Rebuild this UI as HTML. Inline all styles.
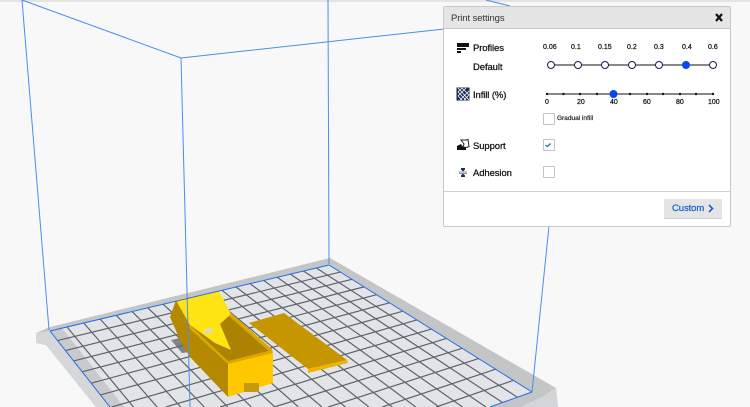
<!DOCTYPE html>
<html><head><meta charset="utf-8"><style>
html,body{margin:0;padding:0;width:750px;height:407px;overflow:hidden}
body{background:#f8f8f8;position:relative;font-family:"Liberation Sans",sans-serif;color:#111}
svg{position:absolute;left:0;top:0;display:block}
#scene{filter:blur(.35px)}
.t{position:absolute;white-space:nowrap;line-height:12px;letter-spacing:-.1px;-webkit-text-stroke:.25px currentColor}
.s{letter-spacing:0}
#panel{position:absolute;left:443px;top:6px;width:286px;height:219px;background:#fff;border:1px solid #c8c8c8;border-radius:2px}
.cb{position:absolute;width:10px;height:10px;background:#fff;border:1px solid #c4c4c4;border-radius:1px}
</style></head><body>
<svg id="scene" width="750" height="407" viewBox="0 0 750 407">
<rect x="0" y="0" width="750" height="2" fill="#e4e4e4"/>
<polygon points="36,333 50,327 330,258 556,388 558,407 96,407 46,345 36,343" fill="#c4c5c7"/>
<polygon points="46,345 36,343 36,333 50,331 112,407 96,407" fill="#d6d7d9"/>
<polygon points="540,398 556,388 558,407 520,407" fill="#d4d5d7"/>
<polygon points="50,331 329,265 532,392 490,407 110,407" fill="#e3e4e7"/>
<polygon points="50,331 62,328 124,407 110,407" fill="#c9cacc"/>
<g id="grid" stroke="#5d6368" stroke-width="1.200" fill="none"></g>
<polygon points="171,340 180,338 190,352 182,353" fill="#5f6368" opacity=".75"/>
<polygon points="249,323 284,313 347,360 308,369" fill="#c69600"/>
<polygon points="308,369 347,360 348,363 308,373" fill="#f0b400"/>
<polygon points="176,300 170,317 180,340 190,357 228,397 228,362 190,325" fill="#b48900"/>
<polygon points="231,314 272,351 228,363 190,326" fill="#ab8300"/>
<polygon points="176,300 219,291 231,314 220,324 231,350 215,343 190,325" fill="#ffe414"/>
<polygon points="228,363 273,353 273,383 228,397" fill="#ffc800"/>
<polygon points="190,325 228,361 272,350 273,353 228,364 189,328" fill="#dca800"/>
<polygon points="231,313 273,350 270,352 229,316" fill="#dca800"/>
<rect x="244" y="383" width="15" height="9" fill="#c49a10"/>
<polygon points="204,330 212,328 213,332 205,334" fill="#d8d8d0"/>
<g stroke="#4a8df0" stroke-width="1" fill="none">
<line x1="49" y1="330" x2="22" y2="0"/>
<line x1="329" y1="264" x2="328" y2="0"/>
<line x1="181" y1="58" x2="190" y2="407"/>
<line x1="181" y1="58" x2="22" y2="0"/>
<line x1="181" y1="58" x2="444" y2="29"/>
<line x1="486" y1="0" x2="510" y2="6"/>
<line x1="532" y1="392" x2="549" y2="226"/>
</g>
<g stroke="#1f6fe8" stroke-width="1" fill="none">
<line x1="50" y1="331" x2="329" y2="265"/>
<line x1="329" y1="265" x2="532" y2="392"/>
<line x1="50" y1="331" x2="110" y2="407"/>
<line x1="532" y1="392" x2="490" y2="407"/>
</g>
</svg>
<div id="panel"></div>
<div style="position:absolute;left:444px;top:7px;width:286px;height:21px;background:#e5e5e6;border-bottom:1px solid #c8c8c8"></div>
<div class="cb" style="left:543px;top:113px"></div>
<div class="cb" style="left:543px;top:139px"></div>
<div class="cb" style="left:543px;top:166px"></div>
<div style="position:absolute;left:444px;top:191px;width:286px;height:1px;background:#d0d0d0"></div>
<div style="position:absolute;left:664px;top:199px;width:58px;height:20px;background:#e5e5e6;border-bottom:1px solid #d0d0d0;box-sizing:border-box"></div>
<svg width="750" height="407" viewBox="0 0 750 407">
<path d="M716 14l6 7M722 14l-6 7" stroke="#111" stroke-width="2.200"/>
<rect x="457" y="43" width="12" height="4" fill="#111"/><rect x="457" y="48" width="9" height="2" fill="#111"/><rect x="457" y="51" width="4" height="2" fill="#111"/>
<rect x="457" y="88" width="12" height="12" fill="#1b2a55" stroke="#1b2a55"/>
<path d="M458 92l4-4M458 96l8-8M460 100l9-9M464 100l5-5M458 92l8 8M458 96l4 4M462 88l7 7M458 88l11 12" stroke="#fff" stroke-width=".8"/>
<path d="M461 140h5l2-.5 1 7-2 1-4-.5 1-3z" fill="#fff" stroke="#222" stroke-width="1"/>
<path d="M457 146l4-2 2 3 3 1v2h-9z" fill="#111"/>
<path d="M461 168h4v1.500l-2 2-2-2zM461 177h4v-1.500l-2-2-2 2z" fill="#1b2a55"/>
<path d="M459 172h8M459 173.500h8" stroke="#6a7488" stroke-width=".7"/>
<line x1="551" y1="65" x2="713" y2="65" stroke="#111" stroke-width="1"/>
<g fill="#fff" stroke="#10204a" stroke-width="1"><circle cx="551" cy="65" r="3.500"/><circle cx="578" cy="65" r="3.500"/><circle cx="605" cy="65" r="3.500"/><circle cx="632" cy="65" r="3.500"/><circle cx="659" cy="65" r="3.500"/><circle cx="713" cy="65" r="3.500"/></g>
<circle cx="686" cy="65" r="4" fill="#0b47f0"/>
<line x1="547" y1="94" x2="713" y2="94" stroke="#111" stroke-width="1"/>
<g fill="#111"><circle cx="547" cy="94" r="1.200"/><circle cx="563.500" cy="94" r="1.200"/><circle cx="580" cy="94" r="1.200"/><circle cx="597" cy="94" r="1.200"/><circle cx="630" cy="94" r="1.200"/><circle cx="647" cy="94" r="1.200"/><circle cx="663" cy="94" r="1.200"/><circle cx="680" cy="94" r="1.200"/><circle cx="696" cy="94" r="1.200"/><circle cx="713" cy="94" r="1.200"/></g>
<circle cx="613.500" cy="94" r="4" fill="#0b47f0"/>
<path d="M545.500 145l2 1.500 3-3" stroke="#1f6fe8" stroke-width="1.300" fill="none"/>
<path d="M709 205l3.500 3.500-3.500 3.500" stroke="#1c5fd0" stroke-width="1.600" fill="none"/>
</svg>
<div class="t" style="left:451px;top:13px;font-size:9.500px;color:#333;-webkit-text-stroke:0">Print settings</div>
<div class="t" style="left:473px;top:43px;font-size:9.500px">Profiles</div>
<div class="t" style="left:473px;top:62px;font-size:9.500px">Default</div>
<div class="t" style="left:473px;top:90px;font-size:9.500px">Infill (%)</div>
<div class="t" style="left:473px;top:141px;font-size:9.500px">Support</div>
<div class="t" style="left:473px;top:168px;font-size:9.500px">Adhesion</div>
<div class="t s" style="left:543px;top:42px;font-size:7px">0.06</div>
<div class="t s" style="left:571px;top:42px;font-size:7px">0.1</div>
<div class="t s" style="left:598px;top:42px;font-size:7px">0.15</div>
<div class="t s" style="left:627px;top:42px;font-size:7px">0.2</div>
<div class="t s" style="left:654px;top:42px;font-size:7px">0.3</div>
<div class="t s" style="left:682px;top:42px;font-size:7px">0.4</div>
<div class="t s" style="left:708px;top:42px;font-size:7px">0.6</div>
<div class="t s" style="left:545px;top:97px;font-size:7px">0</div>
<div class="t s" style="left:577px;top:97px;font-size:7px">20</div>
<div class="t s" style="left:610px;top:97px;font-size:7px">40</div>
<div class="t s" style="left:643px;top:97px;font-size:7px">60</div>
<div class="t s" style="left:676px;top:97px;font-size:7px">80</div>
<div class="t s" style="left:708px;top:97px;font-size:7px">100</div>
<div class="t s" style="left:557px;top:113px;font-size:6.500px;color:#333">Gradual infill</div>
<div class="t" style="left:672px;top:203px;font-size:9.500px;color:#1c5fd0">Custom</div>
<script>
(function(){
var P=[[50,331],[329,265],[532,392],[193.5,513]];
var x0=P[0][0],y0=P[0][1],x1=P[1][0],y1=P[1][1],x2=P[2][0],y2=P[2][1],x3=P[3][0],y3=P[3][1];
var dx1=x1-x2,dx2=x3-x2,dy1=y1-y2,dy2=y3-y2,sx=x0-x1+x2-x3,sy=y0-y1+y2-y3;
var den=dx1*dy2-dx2*dy1;
var g=(sx*dy2-dx2*sy)/den,h=(dx1*sy-sx*dy1)/den;
var a=x1-x0+g*x1,b=x3-x0+h*x3,c=x0,d=y1-y0+g*y1,e=y3-y0+h*y3,f=y0;
function M(u,v){var w=g*u+h*v+1;return[(a*u+b*v+c)/w,(d*u+e*v+f)/w]}
function L(p,q){
if(p[1]>407&&q[1]>407)return '';
if(q[1]>407){var k=(407-p[1])/(q[1]-p[1]);q=[p[0]+k*(q[0]-p[0]),407];}
if(p[1]>407){var m=(407-q[1])/(p[1]-q[1]);p=[q[0]+m*(p[0]-q[0]),407];}
return '<line x1="'+p[0]+'" y1="'+p[1]+'" x2="'+q[0]+'" y2="'+q[1]+'"/>';
}
var s='',Nu=19,Nv=14,i;
for(i=1;i<Nu;i++){s+=L(M(i/Nu,0),M(i/Nu,1));}
for(i=1;i<Nv;i++){s+=L(M(0,i/Nv),M(1,i/Nv));}
document.getElementById('grid').innerHTML=s;
})();
</script>
</body></html>
